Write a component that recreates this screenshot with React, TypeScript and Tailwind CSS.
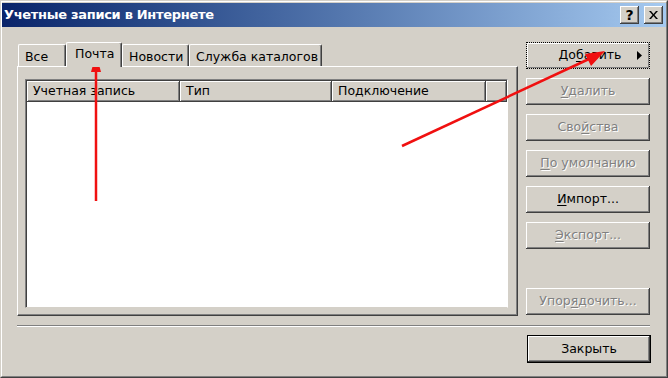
import React from 'react';

const raised =
  'shadow-[inset_-1px_-1px_#404040,inset_1px_1px_#ffffff,inset_-2px_-2px_#808080,inset_2px_2px_#d4d0c8]';

function U({ children }: { children: React.ReactNode }) {
  return <span className="underline underline-offset-[2px]">{children}</span>;
}

function WinButton({
  children,
  disabled,
  className = '',
}: {
  children: React.ReactNode;
  disabled?: boolean;
  className?: string;
}) {
  return (
    <div
      className={`h-[27px] w-[124px] flex items-center justify-center bg-[#d4d0c8] ${raised} ${
        disabled ? 'text-[#808080] [text-shadow:1px_1px_0_#ffffff]' : 'text-black'
      } ${className}`}
    >
      {children}
    </div>
  );
}

function Tab({
  label,
  width,
  selected,
}: {
  label: string;
  width: string;
  selected?: boolean;
}) {
  return (
    <div
      className={`${width} relative flex items-start bg-[#d4d0c8] border-t border-l border-white rounded-tl-[2px] rounded-tr-[2px] border-r border-r-[#404040] shadow-[inset_-1px_0_#808080] ${
        selected ? 'h-[25px] z-10 -mb-[1px] pt-[2px] pl-[8px]' : 'h-[22px] mt-[3px] pt-[3px] pl-[6px]'
      }`}
    >
      {label}
    </div>
  );
}

function HeaderCell({ label, width }: { label: string; width: string }) {
  return (
    <div className={`${width} h-full flex items-center pl-[6px] ${raised}`}>{label}</div>
  );
}

export default function App() {
  return (
    <div className="relative w-[668px] h-[378px] bg-[#d4d0c8] text-[12.5px] text-black font-['DejaVu_Sans',sans-serif] border-t border-l border-[#d4d0c8] border-r border-b border-r-[#404040] border-b-[#404040]">
      <div className="w-full h-full flex flex-col border-t border-l border-white border-r border-b border-r-[#808080] border-b-[#808080]">
        {/* Title bar */}
        <div className="mt-[1px] h-[24px] flex items-center justify-between bg-gradient-to-r from-[#0a246a] to-[#a6caf0] pl-[2px] pr-[3px]">
          <span className="text-white font-bold text-[13px] tracking-[-0.3px]">Учетные записи в Интернете</span>
          <div className="flex items-center">
            <div className={`w-[19px] h-[18px] bg-[#d4d0c8] ${raised} flex items-center justify-center font-bold text-[14px] leading-none`}>
              ?
            </div>
            <div className={`ml-[5px] w-[19px] h-[18px] bg-[#d4d0c8] ${raised} flex items-center justify-center`}>
              <svg width="9" height="8" viewBox="0 0 9 8">
                <path d="M0 0h2l2.5 3 2.5-3h2L5.5 4 9 8H7L4.5 5 2 8H0l3.5-4z" fill="#000" />
              </svg>
            </div>
          </div>
        </div>

        {/* Body */}
        <div className="flex pl-[15px] pr-[15px]">
          <div className="w-[501px] pt-[14px] flex flex-col">
            <div className="flex items-end pl-[1px]">
              <Tab label="Все" width="w-[48px]" />
              <Tab label="Почта" width="w-[56px]" selected />
              <Tab label="Новости" width="w-[67px]" />
              <Tab label="Служба каталогов" width="w-[133px]" />
            </div>
            <div className="h-[250px] border-t border-l border-white border-r border-b border-r-[#404040] border-b-[#404040] shadow-[inset_-1px_-1px_#808080] pt-[12px] pl-[7px]">
              <div className="w-[483px] h-[229px] bg-white border-t border-l border-[#808080] border-r border-b border-r-white border-b-[#d4d0c8] shadow-[inset_1px_1px_#404040]">
                <div className="ml-[1px] mt-[1px] h-[21px] flex bg-[#d4d0c8]">
                  <HeaderCell label="Учетная запись" width="w-[153px]" />
                  <HeaderCell label="Тип" width="w-[152px]" />
                  <HeaderCell label="Подключение" width="w-[154px]" />
                  <div className={`flex-1 h-full ${raised}`} />
                </div>
              </div>
            </div>
          </div>

          <div className="ml-[8px] pt-[15px] flex flex-col gap-[9px]">
            <div className="relative h-[27px] w-[124px] flex items-center bg-[#d4d0c8] border border-dotted border-black shadow-[inset_-1px_-1px_#808080,inset_1px_1px_#ffffff]">
              <span className="ml-[16px] flex-1 text-center">
                До<U>б</U>авить
              </span>
              <svg width="5" height="9" viewBox="0 0 5 9" className="mr-[7px]">
                <path d="M0 0l5 4.5L0 9z" fill="#000" />
              </svg>
            </div>
            <WinButton disabled>
              <U>У</U>далить
            </WinButton>
            <WinButton disabled>
              Сво<U>й</U>ства
            </WinButton>
            <WinButton disabled>
              <U>П</U>о умолчанию
            </WinButton>
            <WinButton>
              <U>И</U>мпорт...
            </WinButton>
            <WinButton disabled>
              <U>Э</U>кспорт...
            </WinButton>
            <WinButton disabled className="mt-[30px]">
              Упор<U>я</U>дочить...
            </WinButton>
          </div>
        </div>

        {/* Separator */}
        <div className="ml-[15px] mr-[16px] mt-[9px] h-[2px] border-t border-[#808080] border-b border-b-white" />

        <div className="flex justify-end pr-[15px] mt-[8px]">
          <div className="w-[124px] h-[28px] border border-black">
            <div className={`w-full h-full flex items-center justify-center ${raised}`}>Закрыть</div>
          </div>
        </div>
      </div>

      {/* Red annotation arrows */}
      <svg className="absolute left-0 top-0 pointer-events-none" width="668" height="378" viewBox="0 0 668 378">
        <line x1="95" y1="200" x2="95" y2="68" stroke="#f01010" strokeWidth="2.5" />
        <path d="M95 53 L100 71 L90 71 Z" fill="#f01010" />
        <line x1="401" y1="145" x2="588" y2="58" stroke="#f01010" strokeWidth="2.5" />
        <path d="M604 50 L590 65 L584 53 Z" fill="#f01010" />
      </svg>
    </div>
  );
}
